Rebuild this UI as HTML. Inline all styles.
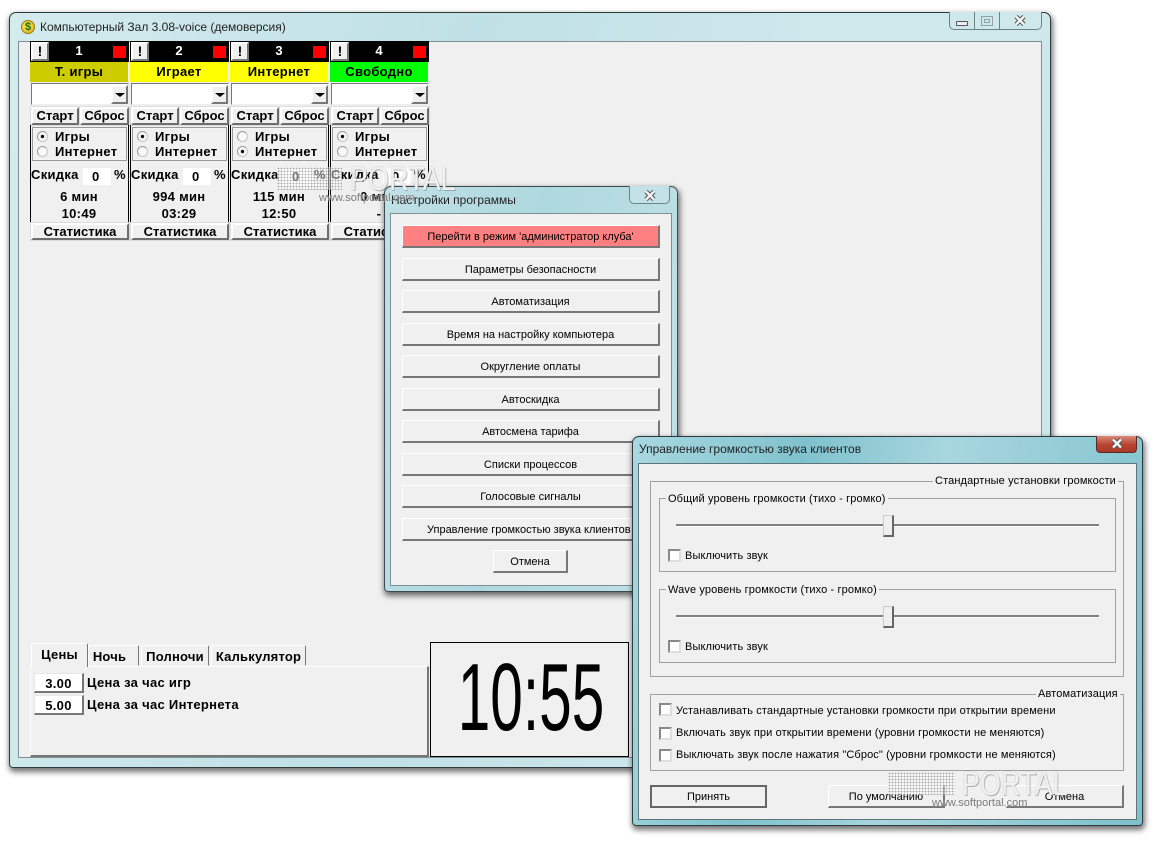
<!DOCTYPE html>
<html><head><meta charset="utf-8">
<style>
html,body{margin:0;padding:0;background:#fff}
#r{position:relative;width:1161px;height:843px;overflow:hidden;background:#fff;font-family:"Liberation Sans",sans-serif;color:#000}
#r div,#r svg{position:absolute;box-sizing:border-box}
.win{border-radius:7px 7px 4px 4px;border:1px solid #3a4a4e;box-shadow:1px 3px 6px 1px rgba(0,0,0,.55)}
.client{background:#f0f0f0;border:1px solid #7f9094}
.b{font-weight:bold;font-size:13px;letter-spacing:0;white-space:nowrap;text-align:center}
.btn{background:#f0f0f0;border:2px solid;border-color:#fff #6e6e6e #6e6e6e #fff;box-shadow:0 0 0 1px #dcdcdc;text-align:center;white-space:nowrap}
.card{left:0;top:0;width:100px;height:240px}
.bl{background:#000}
.ex{left:1px;top:1px;width:18px;height:19px;background:#f0f0f0;border:2px solid;border-color:#fff #777 #777 #fff;font-weight:bold;font-size:14px;line-height:15px;text-align:center}
.rq{left:83px;top:5px;width:13px;height:12px;background:#f00}
.num{left:20px;top:0;width:58px;height:20px;color:#fff;font-weight:bold;font-size:13px;line-height:19px;text-align:center}
.st{left:0;top:21px;width:98px;height:20px;font-weight:bold;font-size:13px;letter-spacing:.3px;line-height:19px;text-align:center}
.combo{left:1px;top:42px;width:98px;height:22px;background:#fff;border:1px solid;border-color:#777 #eee #eee #777}
.arrow{right:0;top:1px;width:17px;height:19px;background:#f0f0f0;border:2px solid;border-color:#fff #777 #777 #fff}
.arrow:after{content:"";position:absolute;left:2px;top:6px;border:5px solid transparent;border-top:4px solid #000;border-bottom:0}
.grp{left:2px;top:86px;width:95px;height:34px;border:1px solid #999;box-shadow:inset 0 0 0 1px #f4f4f4}
.rad{width:11px;height:11px;border-radius:50%;background:#f8f8f8;border:1px solid #c4c4c4;border-top-color:#999;border-left-color:#999}
.rad.on:after{content:"";position:absolute;left:3px;top:3px;width:3px;height:3px;border-radius:50%;background:#000;box-shadow:0 0 1px #000}
.t{font-weight:bold;font-size:13px;letter-spacing:.3px;white-space:nowrap;line-height:15px}
.c{text-align:center;left:0;width:98px}
.vl{top:84px;width:1px;height:114px;background:#000}
.d{font-size:11px;letter-spacing:.12px;white-space:nowrap;line-height:14px}
.dbtn{left:402px;width:258px;height:23px;background:#f0f0f0;border:1px solid;border-color:#fff #777 #777 #fff;border-width:1px 2px 2px 1px;font-size:11px;line-height:22px;text-align:center;white-space:nowrap;overflow:hidden}
.gb{border:1px solid #a0a0a0}
.lg{background:#f0f0f0;font-size:11px;letter-spacing:.12px;line-height:13px;padding:0 2px;white-space:nowrap}
.cb{width:13px;height:13px;background:#fff;border:2px solid;border-color:#888 #ddd #ddd #888}
.trk{height:3px;background:#808080;border-bottom:1px solid #fff}
.thumb{width:11px;height:22px;background:#efefef;border:1px solid;border-color:#ccc #666 #666 #ccc;border-width:1px 2px 2px 1px}
.tab{background:#f0f0f0;border:1px solid;border-color:#fff #777 #f0f0f0 #fff;border-radius:2px 2px 0 0;font-weight:bold;font-size:13px;letter-spacing:.2px;text-align:center;white-space:nowrap;line-height:21px}
.inp{left:34px;width:50px;height:20px;background:#fff;border:1px solid;border-color:#e8e8e8 #777 #777 #e8e8e8;border-width:1px 2px 2px 1px;font-weight:bold;font-size:13px;letter-spacing:.3px;line-height:19px;text-align:center}
.tt{font-size:12px;color:#222;white-space:nowrap;line-height:15px}
.wm{color:rgba(255,255,255,.85);white-space:nowrap;text-shadow:0 0 1px #999,1px 1px 0 rgba(120,120,120,.5);transform:scaleX(.82);transform-origin:0 0}
.wu{color:#777;white-space:nowrap;text-shadow:0 0 1px #fff}
.dots{background-image:radial-gradient(#999 0.8px,rgba(255,255,255,.6) 1px);background-size:3px 3px}
</style></head><body><div id="r">

<!-- main window -->
<div class="win" style="left:9px;top:12px;width:1042px;height:756px;background:linear-gradient(100deg,#d4ebee 0,#bfe0e6 40%,#cfe8ec 70%,#cde7eb 100%);border-color:#2e3a3d"></div>
<div style="left:21px;top:20px;width:14px;height:14px;border-radius:50%;background:radial-gradient(circle at 40% 40%,#f4d83a 0 40%,#c89a10 100%);border:1px solid #a07a10;color:#1d6a18;font-size:11px;font-weight:bold;line-height:12px;text-align:center">$</div>
<div class="tt" style="left:40px;top:20px">Компьютерный Зал 3.08-voice (демоверсия)</div>
<div style="left:949px;top:12px;width:93px;height:18px;border:1px solid #6f8286;border-top:0;border-radius:0 0 5px 5px;background:#cfe8ec"></div>
<div style="left:974px;top:12px;width:1px;height:17px;background:#6f8286"></div>
<div style="left:999px;top:12px;width:1px;height:17px;background:#6f8286"></div>
<div style="left:956px;top:21px;width:12px;height:5px;border:1px solid #555;background:#eee;border-radius:1px"></div>
<div style="left:981px;top:16px;width:12px;height:10px;border:1px solid #8fa2a6"><div style="left:2px;top:2px;width:6px;height:4px;border:1px solid #8fa2a6"></div></div>
<svg style="left:1014px;top:15px" width="12" height="11" viewBox="0 0 12 11"><path d="M2 1.5L10 9.5M10 1.5L2 9.5" stroke="#555" stroke-width="4.5" fill="none"/><path d="M2 1.5L10 9.5M10 1.5L2 9.5" stroke="#f4f4f4" stroke-width="2.4" fill="none"/></svg>
<div class="client" style="left:18px;top:41px;width:1024px;height:717px"></div>

<!-- card 1 -->
<div class="card" style="left:30px;top:41px">
 <div class="bl" style="left:0;top:0;width:99px;height:21px"></div><div class="ex">!</div><div class="num">1</div><div class="rq"></div>
 <div class="st" style="background:#cccc00">Т. игры</div>
 <div class="combo"><div class="arrow"></div></div>
 <div class="btn b" style="left:1px;top:66px;width:48px;height:18px;line-height:14px">Старт</div>
 <div class="btn b" style="left:50px;top:66px;width:49px;height:18px;line-height:14px">Сброс</div>
 <div class="vl" style="left:0"></div><div class="vl" style="left:98px"></div>
 <div class="grp"></div>
 <div class="rad on" style="left:7px;top:90px"></div><div class="t" style="left:25px;top:88px">Игры</div>
 <div class="rad" style="left:7px;top:105px"></div><div class="t" style="left:25px;top:103px">Интернет</div>
 <div class="t" style="left:1px;top:126px">Скидка</div><div style="left:53px;top:127px;width:28px;height:17px;background:#fff"></div><div class="t" style="left:62px;top:128px">0</div><div class="t" style="left:84px;top:126px">%</div>
 <div class="t c" style="top:148px">6 мин</div><div class="t c" style="top:165px">10:49</div>
 <div class="btn b" style="left:1px;top:182px;width:98px;height:17px;line-height:13px">Статистика</div>
</div>
<!-- card 2 -->
<div class="card" style="left:130px;top:41px">
 <div class="bl" style="left:0;top:0;width:99px;height:21px"></div><div class="ex">!</div><div class="num">2</div><div class="rq"></div>
 <div class="st" style="background:#ffff00">Играет</div>
 <div class="combo"><div class="arrow"></div></div>
 <div class="btn b" style="left:1px;top:66px;width:48px;height:18px;line-height:14px">Старт</div>
 <div class="btn b" style="left:50px;top:66px;width:49px;height:18px;line-height:14px">Сброс</div>
 <div class="vl" style="left:0"></div><div class="vl" style="left:98px"></div>
 <div class="grp"></div>
 <div class="rad on" style="left:7px;top:90px"></div><div class="t" style="left:25px;top:88px">Игры</div>
 <div class="rad" style="left:7px;top:105px"></div><div class="t" style="left:25px;top:103px">Интернет</div>
 <div class="t" style="left:1px;top:126px">Скидка</div><div style="left:53px;top:127px;width:28px;height:17px;background:#fff"></div><div class="t" style="left:62px;top:128px">0</div><div class="t" style="left:84px;top:126px">%</div>
 <div class="t c" style="top:148px">994 мин</div><div class="t c" style="top:165px">03:29</div>
 <div class="btn b" style="left:1px;top:182px;width:98px;height:17px;line-height:13px">Статистика</div>
</div>
<!-- card 3 -->
<div class="card" style="left:230px;top:41px">
 <div class="bl" style="left:0;top:0;width:99px;height:21px"></div><div class="ex">!</div><div class="num">3</div><div class="rq"></div>
 <div class="st" style="background:#ffff00">Интернет</div>
 <div class="combo"><div class="arrow"></div></div>
 <div class="btn b" style="left:1px;top:66px;width:48px;height:18px;line-height:14px">Старт</div>
 <div class="btn b" style="left:50px;top:66px;width:49px;height:18px;line-height:14px">Сброс</div>
 <div class="vl" style="left:0"></div><div class="vl" style="left:98px"></div>
 <div class="grp"></div>
 <div class="rad" style="left:7px;top:90px"></div><div class="t" style="left:25px;top:88px">Игры</div>
 <div class="rad on" style="left:7px;top:105px"></div><div class="t" style="left:25px;top:103px">Интернет</div>
 <div class="t" style="left:1px;top:126px">Скидка</div><div style="left:53px;top:127px;width:28px;height:17px;background:#fff"></div><div class="t" style="left:62px;top:128px">0</div><div class="t" style="left:84px;top:126px">%</div>
 <div class="t c" style="top:148px">115 мин</div><div class="t c" style="top:165px">12:50</div>
 <div class="btn b" style="left:1px;top:182px;width:98px;height:17px;line-height:13px">Статистика</div>
</div>
<!-- card 4 -->
<div class="card" style="left:330px;top:41px">
 <div class="bl" style="left:0;top:0;width:99px;height:21px"></div><div class="ex">!</div><div class="num">4</div><div class="rq"></div>
 <div class="st" style="background:#00ff00">Свободно</div>
 <div class="combo"><div class="arrow"></div></div>
 <div class="btn b" style="left:1px;top:66px;width:48px;height:18px;line-height:14px">Старт</div>
 <div class="btn b" style="left:50px;top:66px;width:49px;height:18px;line-height:14px">Сброс</div>
 <div class="vl" style="left:0"></div><div class="vl" style="left:98px"></div>
 <div class="grp"></div>
 <div class="rad on" style="left:7px;top:90px"></div><div class="t" style="left:25px;top:88px">Игры</div>
 <div class="rad" style="left:7px;top:105px"></div><div class="t" style="left:25px;top:103px">Интернет</div>
 <div class="t" style="left:1px;top:126px">Скидка</div><div style="left:53px;top:127px;width:28px;height:17px;background:#fff"></div><div class="t" style="left:62px;top:128px">0</div><div class="t" style="left:84px;top:126px">%</div>
 <div class="t c" style="top:148px">0 мин</div><div class="t c" style="top:165px">-</div>
 <div class="btn b" style="left:1px;top:182px;width:98px;height:17px;line-height:13px">Статистика</div>
</div>

<!-- tabs -->
<div style="left:30px;top:666px;width:399px;height:91px;background:#f0f0f0;border:1px solid;border-color:#fff #777 #777 #fff;border-width:1px 2px 2px 1px"></div>
<div class="tab" style="left:88px;top:645px;width:51px;height:21px;padding-right:8px">Ночь</div>
<div class="tab" style="left:141px;top:645px;width:68px;height:21px">Полночи</div>
<div class="tab" style="left:211px;top:645px;width:95px;height:21px">Калькулятор</div>
<div class="tab" style="left:31px;top:643px;width:57px;height:24px;border-bottom:0">Цены</div>
<div class="inp" style="top:673px">3.00</div>
<div class="inp" style="top:695px">5.00</div>
<div class="t" style="left:87px;top:675px">Цена за час игр</div>
<div class="t" style="left:87px;top:697px">Цена за час Интернета</div>

<!-- clock -->
<div style="left:430px;top:642px;width:199px;height:115px;border:1px solid #000;background:#f0f0f0"></div>
<div style="left:331px;top:642px;width:400px;height:115px;text-align:center;font-size:96px;line-height:112px;transform:scaleX(.61);white-space:nowrap">10:55</div>

<!-- settings dialog -->
<div class="win" style="left:384px;top:186px;width:294px;height:406px;background:linear-gradient(100deg,#bfe0e6 0,#aed8df 45%,#c3e2e7 100%)"></div>
<div style="left:629px;top:186px;width:41px;height:18px;border:1px solid #6f8286;border-top:0;border-radius:0 0 5px 5px;background:#c3e2e7"></div>
<svg style="left:644px;top:190px" width="12" height="11" viewBox="0 0 12 11"><path d="M2 1.5L10 9.5M10 1.5L2 9.5" stroke="#555" stroke-width="4.5" fill="none"/><path d="M2 1.5L10 9.5M10 1.5L2 9.5" stroke="#f4f4f4" stroke-width="2.4" fill="none"/></svg>
<div class="tt" style="left:391px;top:193px">Настройки программы</div>
<div class="client" style="left:390px;top:213px;width:282px;height:373px"></div>
<div class="dbtn" style="top:225px;background:#ff8080">Перейти в режим 'администратор клуба'</div>
<div class="dbtn" style="top:258px">Параметры безопасности</div>
<div class="dbtn" style="top:290px">Автоматизация</div>
<div class="dbtn" style="top:323px">Время на настройку компьютера</div>
<div class="dbtn" style="top:355px">Округление оплаты</div>
<div class="dbtn" style="top:388px">Автоскидка</div>
<div class="dbtn" style="top:420px">Автосмена тарифа</div>
<div class="dbtn" style="top:453px">Списки процессов</div>
<div class="dbtn" style="top:485px">Голосовые сигналы</div>
<div class="dbtn" style="top:518px;text-align:left;padding-left:24px">Управление громкостью звука клиентов</div>
<div class="dbtn" style="left:493px;top:550px;width:75px">Отмена</div>

<!-- volume dialog -->
<div class="win" style="left:632px;top:436px;width:511px;height:390px;background:linear-gradient(100deg,#a9d8e0 0,#7fc2cd 30%,#a8d6de 55%,#7dc1cc 100%);border-color:#2e3a3d"></div>
<div style="left:1096px;top:436px;width:41px;height:17px;border-radius:0 0 4px 4px;background:linear-gradient(#d98a7c,#b8432f 55%,#a83a28);border:1px solid #5a2a22;border-top:0"></div>
<svg style="left:1111px;top:438px" width="12" height="11" viewBox="0 0 12 11"><path d="M2 1.5L10 9.5M10 1.5L2 9.5" stroke="#555" stroke-width="4.5" fill="none"/><path d="M2 1.5L10 9.5M10 1.5L2 9.5" stroke="#f4f4f4" stroke-width="2.4" fill="none"/></svg>
<div class="tt" style="left:639px;top:442px">Управление громкостью звука клиентов</div>
<div class="client" style="left:638px;top:463px;width:499px;height:357px;border-color:#5e7478"></div>

<div class="gb" style="left:650px;top:481px;width:474px;height:196px"></div>
<div class="lg" style="left:933px;top:475px">Стандартные установки громкости</div>

<div class="gb" style="left:659px;top:498px;width:457px;height:74px"></div>
<div class="lg" style="left:666px;top:493px">Общий уровень громкости (тихо - громко)</div>
<div class="trk" style="left:676px;top:524px;width:423px"></div>
<div class="thumb" style="left:883px;top:515px"></div>
<div class="cb" style="left:668px;top:549px"></div>
<div class="d" style="left:685px;top:549px">Выключить звук</div>

<div class="gb" style="left:659px;top:589px;width:457px;height:74px"></div>
<div class="lg" style="left:666px;top:584px">Wave уровень громкости (тихо - громко)</div>
<div class="trk" style="left:676px;top:615px;width:423px"></div>
<div class="thumb" style="left:883px;top:606px"></div>
<div class="cb" style="left:668px;top:640px"></div>
<div class="d" style="left:685px;top:640px">Выключить звук</div>

<div class="gb" style="left:650px;top:694px;width:474px;height:77px"></div>
<div class="lg" style="left:1036px;top:688px">Автоматизация</div>
<div class="cb" style="left:659px;top:703px"></div><div class="d" style="left:676px;top:704px">Устанавливать стандартные установки громкости при открытии времени</div>
<div class="cb" style="left:659px;top:727px"></div><div class="d" style="left:676px;top:726px">Включать звук при открытии времени (уровни громкости не меняются)</div>
<div class="cb" style="left:659px;top:749px"></div><div class="d" style="left:676px;top:748px">Выключать звук после нажатия "Сброс" (уровни громкости не меняются)</div>

<div class="dbtn" style="left:650px;top:785px;width:117px;border:2px solid;border-color:#666;line-height:20px">Принять</div>
<div class="dbtn" style="left:828px;top:785px;width:117px">По умолчанию</div>
<div class="dbtn" style="left:1006px;top:785px;width:118px">Отмена</div>

<!-- watermarks -->
<div class="dots" style="left:277px;top:167px;width:65px;height:23px;opacity:.75"></div>
<div class="wm" style="left:350px;top:161px;font-size:33px;line-height:36px">PORTAL</div>
<div class="wu" style="left:319px;top:192px;font-size:11px;line-height:13px">www.softportal.com</div>
<div class="dots" style="left:888px;top:772px;width:67px;height:23px;opacity:.75"></div>
<div class="wm" style="left:962px;top:766px;font-size:33px;line-height:36px">PORTAL</div>
<div class="wu" style="left:932px;top:797px;font-size:11px;line-height:13px">www.softportal.com</div>

</div></body></html>
